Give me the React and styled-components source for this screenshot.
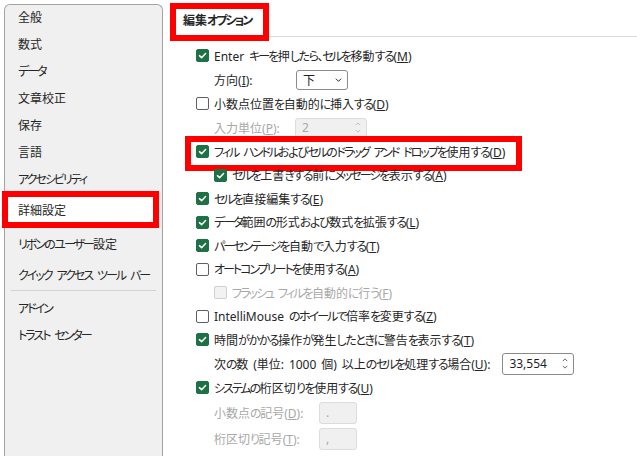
import React from 'react';
import styled, { createGlobalStyle, css } from 'styled-components';

const GlobalStyle = createGlobalStyle`
  html, body {
    margin: 0;
    padding: 0;
    background: #fff;
    overflow: hidden;
  }
  body {
    font-family: "Noto Sans", "Noto Sans CJK JP", sans-serif;
    font-size: 12px;
    color: #262626;
    font-feature-settings: "palt";
  }
`;

const Page = styled.div`
  display: flex;
  width: 637px;
  height: 456px;
  overflow: hidden;
`;

/* かなは UI フォントに合わせて詰める */
const spacing = { kata: -2, hira: -1.4, space: 1.8, other: 0 };

const Run = styled.span`
  letter-spacing: ${p => spacing[p.$kind]}px;
`;

const splitRuns = text =>
  text.match(/[\u30A0-\u30FF]+|[\u3040-\u309F\u3001\u3002]+| +|[^\u3040-\u30FF\u3001\u3002 ]+/g) || [];

const kindOf = run => {
  if (run[0] === ' ') return 'space';
  if (/[\u30A0-\u30FF]/.test(run[0])) return 'kata';
  if (/[\u3040-\u309F\u3001\u3002]/.test(run[0])) return 'hira';
  return 'other';
};

const Jp = ({ text }) => (
  <span>
    {splitRuns(text).map((r, i) => (
      <Run key={i} $kind={kindOf(r)}>{r}</Run>
    ))}
  </span>
);

const Caption = ({ text, accel, suffix = '' }) => (
  <span>
    <Jp text={text} />
    {accel && (
      <>
        (<u>{accel}</u>){suffix}
      </>
    )}
  </span>
);

/* 左側のカテゴリ一覧 */
const Sidebar = styled.nav`
  flex: none;
  width: 157px;
  margin: 4px 0 0 4px;
  border: 1px solid #a3a3a3;
  border-bottom: none;
  border-radius: 6px 6px 0 0;
  background: #f0f0f0;
  display: flex;
  flex-direction: column;
`;

const RedMark = css`
  &::after {
    content: '';
    position: absolute;
    box-sizing: border-box;
    border: 6px solid #ff0000;
    pointer-events: none;
  }
`;

const MenuItem = styled.div`
  position: relative;
  display: flex;
  align-items: center;
  box-sizing: border-box;
  height: 27px;
  padding: 0 0 3px 13px;
  white-space: nowrap;

  ${p => p.$tall && css`
    height: 31px;
    padding-bottom: 0;
  `}

  ${p => p.$gapTop && css`
    margin-top: ${p.$gapTop}px;
  `}

  ${p => p.$selected && css`
    height: 28px;
    margin: 2px 3px 4px;
    padding: 0 0 0 10px;
    background: #fff;
    ${RedMark}
    &::after {
      left: -6px;
      top: -5px;
      right: 0;
      bottom: -4px;
    }
  `}
`;

const MenuDivider = styled.div`
  height: 1px;
  margin: 0 6px;
  background: #d2d2d2;
`;

const Main = styled.main`
  flex: 1;
  display: flex;
  flex-direction: column;
`;

const SectionHeading = styled.h2`
  position: relative;
  margin: 0 0 0 8px;
  height: 37px;
  box-sizing: border-box;
  padding: 12px 0 0 12px;
  border-bottom: 1px solid #d9d9d9;
  font-size: 12px;
  font-weight: 700;
  line-height: 18px;
  ${RedMark}
  &::after {
    left: -1px;
    top: 3px;
    width: 99px;
    height: 38px;
  }
`;

const Options = styled.div`
  padding-top: 7px;
  display: flex;
  flex-direction: column;
`;

const Row = styled.div`
  position: relative;
  display: flex;
  align-items: center;
  height: ${p => p.$h || 23.5}px;
  padding-left: ${p => 33 + (p.$indent || 0) * 18}px;
  color: ${p => (p.$disabled ? '#a8a8a8' : '#262626')};
  white-space: nowrap;

  ${p => p.$marked && css`
    ${RedMark}
    &::after {
      left: 22px;
      top: -4px;
      width: 337px;
      height: 35px;
    }
  `}
`;

const Box = styled.span`
  flex: none;
  width: 13px;
  height: 13px;
  box-sizing: border-box;
  margin-right: 5px;
  border-radius: 2px;
  display: inline-flex;
  align-items: center;
  justify-content: center;
  background: ${p => (p.$checked ? '#1e7145' : p.$disabled ? '#f2f2f2' : '#fff')};
  border: 1px solid ${p => (p.$checked ? '#1e7145' : p.$disabled ? '#d0d0d0' : '#5f5f5f')};
`;

const Label = styled.span`
  flex: none;
  width: ${p => (p.$w ? `${p.$w}px` : 'auto')};
  margin-right: ${p => p.$gap || 0}px;
`;

const Field = styled.div`
  flex: none;
  display: flex;
  align-items: center;
  justify-content: space-between;
  box-sizing: border-box;
  width: ${p => p.$w}px;
  height: ${p => p.$h || 20}px;
  padding: 0 5px 0 6px;
  border: 1px solid ${p => (p.$disabled ? '#dcdcdc' : '#8a8a8a')};
  border-radius: 3px;
  background: ${p => (p.$disabled ? '#f0f0f0' : '#fff')};
  color: ${p => (p.$disabled ? '#a8a8a8' : '#1f1f1f')};
`;

const Spin = styled.span`
  display: flex;
  flex-direction: column;
  gap: 3px;
  color: ${p => (p.$disabled ? '#b5b5b5' : '#4a4a4a')};
`;

const Check = () => (
  <svg width="9" height="9" viewBox="0 0 10 10">
    <path d="M1.6 5.2 L4 7.4 L8.4 2.8" fill="none" stroke="#fff" strokeWidth="1.7" strokeLinecap="round" strokeLinejoin="round" />
  </svg>
);

const Checkbox = ({ checked, disabled }) => (
  <Box $checked={checked} $disabled={disabled}>
    {checked && <Check />}
  </Box>
);

const Chevron = ({ up, w = 7 }) => (
  <svg width={w} height="4" viewBox="0 0 8 4">
    <path d={up ? 'M1 3.5 L4 0.5 L7 3.5' : 'M1 0.5 L4 3.5 L7 0.5'} fill="none" stroke="currentColor" strokeWidth="1.1" />
  </svg>
);

const Spinner = ({ disabled }) => (
  <Spin $disabled={disabled}>
    <Chevron up w={6} />
    <Chevron w={6} />
  </Spin>
);

const menu = [
  { label: '全般' },
  { label: '数式' },
  { label: 'データ' },
  { label: '文章校正' },
  { label: '保存' },
  { label: '言語' },
  { label: 'アクセシビリティ' },
  { label: '詳細設定', selected: true },
  { label: 'リボンのユーザー設定', tall: true },
  { label: 'クイック アクセス ツール バー', tall: true },
  { divider: true },
  { label: 'アドイン', gapTop: 5 },
  { label: 'トラスト センター' },
];

const options = [
  { type: 'check', checked: true, text: 'Enter キーを押したら、セルを移動する', accel: 'M' },
  { type: 'select', text: '方向', accel: 'I', labelW: 82, value: '下' },
  { type: 'check', text: '小数点位置を自動的に挿入する', accel: 'D' },
  { type: 'spin', disabled: true, text: '入力単位', accel: 'P', labelW: 81, value: '2', fieldW: 72, fieldH: 20 },
  { type: 'check', checked: true, marked: true, text: 'フィル ハンドルおよびセルのドラッグ アンド ドロップを使用する', accel: 'D' },
  { type: 'check', checked: true, indent: 1, text: 'セルを上書きする前にメッセージを表示する', accel: 'A' },
  { type: 'check', checked: true, text: 'セルを直接編集する', accel: 'E' },
  { type: 'check', checked: true, text: 'データ範囲の形式および数式を拡張する', accel: 'L' },
  { type: 'check', checked: true, text: 'パーセンテージを自動で入力する', accel: 'T' },
  { type: 'check', text: 'オートコンプリートを使用する', accel: 'A' },
  { type: 'check', disabled: true, indent: 1, text: 'フラッシュ フィルを自動的に行う', accel: 'F' },
  { type: 'check', text: 'IntelliMouse のホイールで倍率を変更する', accel: 'Z' },
  { type: 'check', checked: true, text: '時間がかかる操作が発生したときに警告を表示する', accel: 'T' },
  { type: 'spin', text: '次の数 (単位: 1000 個) 以上のセルを処理する場合', accel: 'U', gap: 12, value: '33,554', fieldW: 72, fieldH: 22 },
  { type: 'check', checked: true, text: 'システムの桁区切りを使用する', accel: 'U' },
  { type: 'text', disabled: true, text: '小数点の記号', accel: 'D', labelW: 105, value: '.' },
  { type: 'text', disabled: true, text: '桁区切り記号', accel: 'T', labelW: 105, value: ',' },
];

const OptionRow = ({ o }) => {
  if (o.type === 'check') {
    return (
      <Row $indent={o.indent} $disabled={o.disabled} $marked={o.marked}>
        <Checkbox checked={o.checked} disabled={o.disabled} />
        <Caption text={o.text} accel={o.accel} />
      </Row>
    );
  }
  const isText = o.type === 'text';
  return (
    <Row $indent={1} $h={isText ? 26 : 24.5} $disabled={o.disabled}>
      <Label $w={o.labelW} $gap={o.gap}>
        <Caption text={o.text} accel={o.accel} suffix=":" />
      </Label>
      {o.type === 'select' && (
        <Field $w={52}>
          <span>{o.value}</span>
          <Chevron w={7} />
        </Field>
      )}
      {o.type === 'spin' && (
        <Field $w={o.fieldW} $h={o.fieldH} $disabled={o.disabled}>
          <span>{o.value}</span>
          <Spinner disabled={o.disabled} />
        </Field>
      )}
      {isText && (
        <Field $w={38} $h={22} $disabled>
          <span>{o.value}</span>
        </Field>
      )}
    </Row>
  );
};

const App = () => (
  <Page>
    <GlobalStyle />
    <Sidebar>
      {menu.map((m, i) =>
        m.divider ? (
          <MenuDivider key={i} />
        ) : (
          <MenuItem key={i} $selected={m.selected} $tall={m.tall} $gapTop={m.gapTop}>
            <Jp text={m.label} />
          </MenuItem>
        )
      )}
    </Sidebar>

    <Main>
      <SectionHeading>
        <Jp text="編集オプション" />
      </SectionHeading>
      <Options>
        {options.map((o, i) => (
          <OptionRow key={i} o={o} />
        ))}
      </Options>
    </Main>
  </Page>
);

export default App;
